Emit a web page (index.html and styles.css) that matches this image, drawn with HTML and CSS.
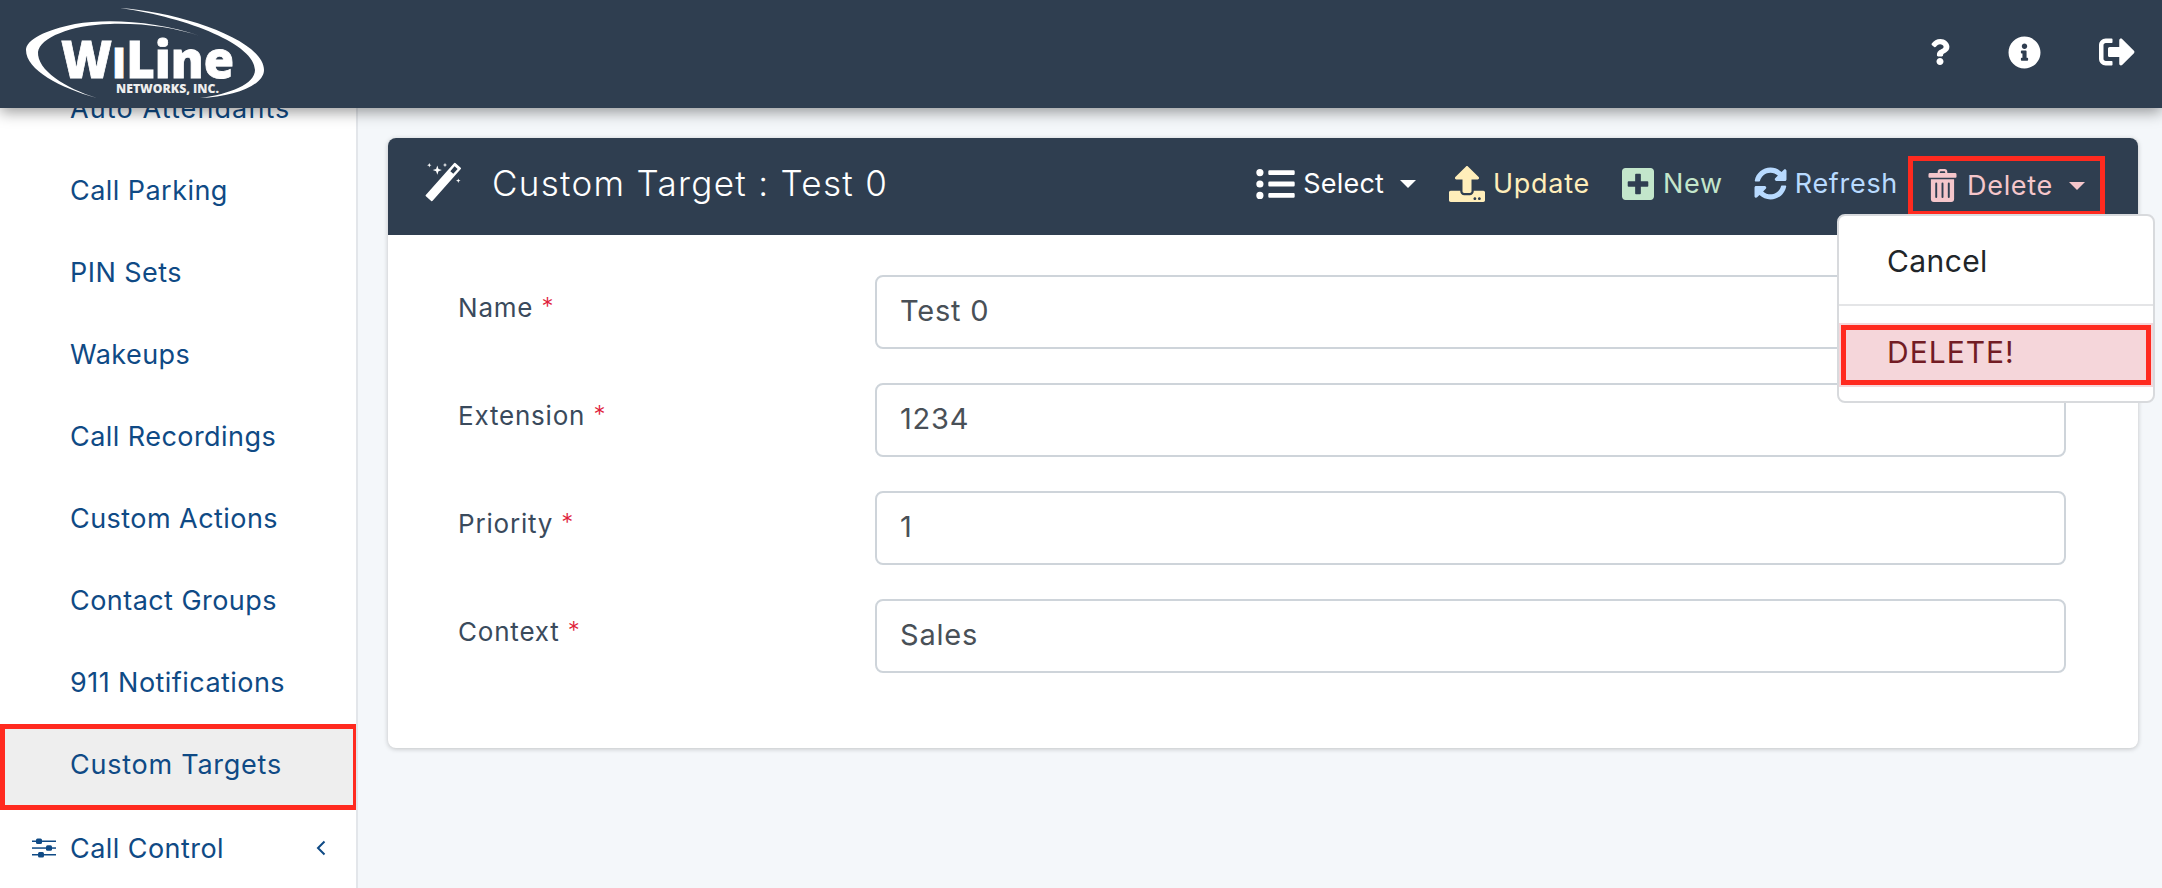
FILE: index.html
```html
<!DOCTYPE html>
<html lang="en">
<head>
<meta charset="utf-8">
<title>Custom Target : Test 0</title>
<link rel="stylesheet" href="styles.css">
</head>
<body>
<header class="topbar">
  <svg class="logo" viewBox="0 0 290 108" width="290" height="108" aria-label="WiLine Networks, Inc.">
    <path fill="#fff" d="M200 36C160 22 110 18 75 24C45 30 26 40 26 50C26 70 60 88 97 98C65 88 37 70 38 52C40 38 70 25 110 24C145 23 175 28 200 36Z"/>
    <path fill="#fff" d="M120 8C180 12 264 40 264 70C264 85 235 97 200 98C230 94 255 84 255 70C255 45 190 18 120 8Z"/>
    <text class="logo-main" x="61" y="78" textLength="173" lengthAdjust="spacingAndGlyphs">W<tspan class="logo-small">i</tspan>Line</text>
    <text class="logo-sub" x="116" y="93" textLength="103" lengthAdjust="spacingAndGlyphs">NETWORKS, INC.</text>
  </svg>
  <nav class="top-icons">
    <svg class="ti-q" viewBox="0 0 384 512"><path fill="#fff" d="M202 0C122 0 70.500 32.700 29.900 91c-7.400 10.600-5.100 25.100 5.200 32.900l43.100 32.700c10.400 7.900 25.100 6 33.300-4.100 25-31.400 43.600-49.500 82.700-49.500 30.800 0 68.800 19.800 68.800 49.600 0 22.600-18.600 34.100-49 51.200-35.400 19.900-82.300 44.600-82.300 106.400V320c0 13.300 10.700 24 24 24h72.500c13.200 0 24-10.700 24-24v-5.800c0-42.800 125.200-44.600 125.200-160.600C377.500 66.300 286.900 0 202 0zM192 373.500c-38.200 0-69.300 31-69.300 69.200 0 38.200 31.100 69.300 69.300 69.300s69.300-31.100 69.300-69.300-31.100-69.200-69.300-69.200z"/></svg>
    <svg class="ti-i" viewBox="0 0 512 512"><path fill="#fff" d="M256 8C119 8 8 119.100 8 256c0 137 111 248 248 248s248-111 248-248C504 119.100 393 8 256 8zm0 110c23.200 0 42 18.800 42 42s-18.800 42-42 42-42-18.800-42-42 18.800-42 42-42zm56 254c0 6.600-5.400 12-12 12h-88c-6.600 0-12-5.400-12-12v-24c0-6.600 5.400-12 12-12h12v-64h-12c-6.600 0-12-5.400-12-12v-24c0-6.600 5.400-12 12-12h64c6.600 0 12 5.400 12 12v100h12c6.600 0 12 5.400 12 12v24z"/></svg>
    <svg class="ti-o" viewBox="0 0 512 512"><path fill="#fff" d="M497 273L329 441c-15 15-41 4.500-41-17v-96H152c-13.300 0-24-10.700-24-24v-96c0-13.300 10.700-24 24-24h136V88c0-21.400 25.900-32 41-17l168 168c9.300 9.400 9.300 24.600 0 34zM192 436v-40c0-6.600-5.400-12-12-12H96c-17.700 0-32-14.300-32-32V160c0-17.700 14.300-32 32-32h84c6.600 0 12-5.400 12-12V76c0-6.600-5.400-12-12-12H96c-53 0-96 43-96 96v192c0 53 43 96 96 96h84c6.600 0 12-5.400 12-12z"/></svg>
  </nav>
</header>
<div class="shell">
  <aside class="sidebar">
    <ul class="side-list">
      <li class="side-item wide"><a>Auto Attendants</a></li>
      <li class="side-item"><a>Call Parking</a></li>
      <li class="side-item"><a>PIN Sets</a></li>
      <li class="side-item"><a>Wakeups</a></li>
      <li class="side-item"><a>Call Recordings</a></li>
      <li class="side-item"><a>Custom Actions</a></li>
      <li class="side-item"><a>Contact Groups</a></li>
      <li class="side-item"><a>911 Notifications</a></li>
      <li class="side-item active"><a>Custom Targets</a></li>
      <li class="side-group">
        <svg class="sliders" viewBox="0 0 24 20"><g fill="#0f4a85"><rect x="0" y="2.500" width="24" height="1.500"/><rect x="0" y="9.300" width="24" height="1.500"/><rect x="0" y="16" width="24" height="1.500"/><rect x="4" y="0.500" width="6" height="5.500" rx="1.500"/><rect x="14" y="7.300" width="6" height="5.500" rx="1.500"/><rect x="6" y="14" width="6" height="5.500" rx="1.500"/></g></svg>
        <span class="side-group-label">Call Control</span>
        <svg class="chev" viewBox="0 0 10 16"><path d="M8.500 1.500L2 8l6.500 6.500" fill="none" stroke="#0f4a85" stroke-width="2"/></svg>
      </li>
    </ul>
  </aside>
  <main class="content">
    <section class="card">
      <div class="card-head">
        <svg class="wand" viewBox="0 0 37 40"><g fill="#fff"><path fill-rule="evenodd" d="M29 1.200a1 1 0 0 1 1.400-.1l5.300 4.600a1 1 0 0 1 .1 1.400L7.600 38.800a1 1 0 0 1-1.400.1L.9 34.300a1 1 0 0 1-.1-1.400zM29.600 4.300l-4.300 4.900 3 2.600 4.300-4.900z"/><path d="M12.300 3.500l1.200 3.400 3.400 1.200-3.400 1.200-1.200 3.400-1.200-3.400-3.400-1.200 3.400-1.200z"/><path d="M4.300 1l.6 1.600 1.600.6-1.600.6-.6 1.600-.6-1.600-1.600-.6 1.600-.6z"/><path d="M20 .8l.6 1.600 1.600.6-1.600.6-.6 1.600-.6-1.600-1.600-.6 1.600-.6z"/><path d="M33.300 16.400l.6 1.700 1.700.6-1.700.6-.6 1.700-.6-1.700-1.700-.6 1.700-.6z"/></g></svg>
        <h1 class="card-title">Custom Target : Test 0</h1>
        <div class="toolbar">
          <button class="tool t-select"><svg class="ic-list" viewBox="0 0 512 400"><path fill="#fff" d="M48 0a48 48 0 1 0 48 48A48 48 0 0 0 48 0zm0 152a48 48 0 1 0 48 48 48 48 0 0 0-48-48zm0 152a48 48 0 1 0 48 48 48 48 0 0 0-48-48zM496 320H176a16 16 0 0 0-16 16v32a16 16 0 0 0 16 16h320a16 16 0 0 0 16-16v-32a16 16 0 0 0-16-16zM496 16H176a16 16 0 0 0-16 16v32a16 16 0 0 0 16 16h320a16 16 0 0 0 16-16V32a16 16 0 0 0-16-16zM496 168H176a16 16 0 0 0-16 16v32a16 16 0 0 0 16 16h320a16 16 0 0 0 16-16v-32a16 16 0 0 0-16-16z"/></svg>Select<span class="caret"></span></button>
          <button class="tool t-update"><svg class="ic-up" viewBox="0 0 512 512"><path fill="#ffeeba" d="M296 384h-80c-13.300 0-24-10.700-24-24V192h-87.700c-17.800 0-26.700-21.500-14.100-34.100L242.300 5.700c7.500-7.500 19.800-7.500 27.300 0l152.200 152.200c12.600 12.600 3.700 34.100-14.100 34.100H320v168c0 13.300-10.700 24-24 24zm216-8v112c0 13.300-10.700 24-24 24H24c-13.300 0-24-10.700-24-24V376c0-13.300 10.700-24 24-24h136v8c0 30.900 25.100 56 56 56h80c30.900 0 56-25.100 56-56v-8h136c13.300 0 24 10.700 24 24zm-124 88c0-11-9-20-20-20s-20 9-20 20 9 20 20 20 20-9 20-20zm64 0c0-11-9-20-20-20s-20 9-20 20 9 20 20 20 20-9 20-20z"/></svg>Update</button>
          <button class="tool t-new"><svg class="ic-new" viewBox="0 0 448 448"><path fill="#c3e6cb" d="M400 0H48C21.500 0 0 21.500 0 48v352c0 26.500 21.500 48 48 48h352c26.500 0 48-21.500 48-48V48c0-26.500-21.500-48-48-48zm-32 252c0 6.600-5.400 12-12 12h-92v92c0 6.600-5.400 12-12 12h-56c-6.600 0-12-5.400-12-12v-92H92c-6.600 0-12-5.400-12-12v-56c0-6.600 5.400-12 12-12h92V92c0-6.600 5.400-12 12-12h56c6.600 0 12 5.400 12 12v92h92c6.600 0 12 5.400 12 12v56z"/></svg>New</button>
          <button class="tool t-refresh"><svg class="ic-ref" viewBox="0 0 512 512"><path fill="#b8daff" d="M370.700 133.300C339.500 104 298.900 88 255.800 88c-77.400.1-144.300 53.200-162.700 126.900-1.400 5.300-6.200 9.100-11.700 9.100H24.100c-7.500 0-13.200-6.800-11.800-14.200C33.900 94.900 134.800 8 256 8c66.400 0 126.800 26.100 171.300 68.700L463 41c15.100-15.100 41-4.400 41 16.900V192c0 13.300-10.700 24-24 24H345.900c-21.300 0-32-25.900-16.900-41l41.700-41.700zM32 296h134.100c21.300 0 32 25.900 16.900 41l-41.700 41.700C172.500 408 213.100 424 256.200 424c77.400-.1 144.300-53.100 162.700-126.800 1.400-5.400 6.200-9.200 11.700-9.200h57.300c7.500 0 13.200 6.800 11.800 14.200C478.100 417.100 377.200 504 256 504c-66.400 0-126.800-26.100-171.300-68.700L49 471c-15.100 15.100-41 4.400-41-16.900V320c0-13.300 10.700-24 24-24z"/></svg>Refresh</button>
          <div class="delete-wrap">
            <button class="tool t-delete"><svg class="ic-trash" viewBox="0 0 30 34"><path fill="#f5c6cb" fill-rule="evenodd" d="M10 4V3a3 3 0 0 1 3-3h4a3 3 0 0 1 3 3v1h8a1.500 1.500 0 0 1 1.500 1.500V8a1 1 0 0 1-1 1H1.500a1 1 0 0 1-1-1V5.500A1.500 1.500 0 0 1 2 4zm2.200 0h5.600V3.200a1 1 0 0 0-1-1h-3.600a1 1 0 0 0-1 1zM3 10.500h24V31a3 3 0 0 1-3 3H6a3 3 0 0 1-3-3zM8.500 14a1 1 0 0 0-1 1v14a1 1 0 0 0 2 0V15a1 1 0 0 0-1-1zm6.500 0a1 1 0 0 0-1 1v14a1 1 0 0 0 2 0V15a1 1 0 0 0-1-1zm6.500 0a1 1 0 0 0-1 1v14a1 1 0 0 0 2 0V15a1 1 0 0 0-1-1z"/></svg>Delete<span class="caret"></span></button>
            <div class="menu">
              <a class="menu-item">Cancel</a>
              <div class="menu-divider"></div>
              <div class="menu-danger"><a class="menu-danger-in">DELETE!</a></div>
            </div>
          </div>
        </div>
      </div>
      <form class="card-body">
        <div class="field"><label class="field-label">Name <span class="req">*</span></label><div class="field-input">Test 0</div></div>
        <div class="field"><label class="field-label">Extension <span class="req">*</span></label><div class="field-input">1234</div></div>
        <div class="field"><label class="field-label">Priority <span class="req">*</span></label><div class="field-input">1</div></div>
        <div class="field"><label class="field-label">Context <span class="req">*</span></label><div class="field-input">Sales</div></div>
      </form>
    </section>
  </main>
</div>
</body>
</html>
```
FILE: styles.css
```css
* { box-sizing: border-box; }
html, body { margin: 0; height: 100%; overflow: hidden; }
body {
  font-family: Inter, "Noto Sans", sans-serif;
  background: #f4f7fa;
  display: flex;
  flex-direction: column;
}
.topbar {
  height: 108px;
  flex: none;
  background: #2f3e50;
  display: flex;
  align-items: flex-start;
  justify-content: space-between;
  box-shadow: 0 4px 14px rgba(0, 0, 0, .4);
  position: relative;
  z-index: 5;
}
.logo { display: block; }
.logo-main { font: 800 52px "Open Sans", sans-serif; fill: #fff; stroke: #fff; stroke-width: .8px; }
.logo-small { font-variant: small-caps; font-size: 62px; }
.logo-sub { font: 800 12.500px "Open Sans", sans-serif; fill: #eee; }
.top-icons { display: flex; align-items: flex-start; padding: 39px 27px 0 0; }
.top-icons svg { display: block; }
.ti-q { width: 20px; height: 26px; margin-right: 58px; }
.ti-i { width: 33px; height: 33px; margin-top: -3px; margin-right: 58px; }
.ti-o { width: 36px; height: 36px; margin-top: -5px; }
.shell { flex: 1; display: flex; min-height: 0; }
.sidebar {
  width: 358px;
  flex: none;
  background: #fff;
  border-right: 2px solid #e3e6ea;
  overflow: hidden;
}
.side-list { list-style: none; margin: -41px 0 0; padding: 0; }
.side-item {
  height: 82px;
  display: flex;
  align-items: center;
  padding-left: 70px;
  color: #0f4a85;
  font-size: 27px;
  letter-spacing: .45px;
}
.side-item.wide { letter-spacing: 1.1px; }
.side-item.active {
  height: 86px;
  margin: 1px -2px -3px 0;
  background: #eee;
  border: 5px solid #ff2a1f;
  padding: 0 0 6px 65px;
  letter-spacing: .75px;
}
.side-group {
  height: 82px;
  display: flex;
  align-items: center;
  padding: 0 30px 0 32px;
  color: #0f4a85;
  font-size: 27px;
  letter-spacing: .45px;
}
.sliders { width: 24px; height: 20px; margin-right: 14px; }
.side-group-label { flex: 1; }
.chev { width: 10px; height: 16px; }
.content { flex: 1; padding: 30px 24px 0 30px; min-width: 0; }
.card {
  background: #fff;
  border-radius: 8px;
  box-shadow: 0 1px 5px rgba(0, 0, 0, .22);
}
.card-head {
  height: 97px;
  background: #2f3e50;
  border-radius: 8px 8px 0 0;
  display: flex;
  align-items: center;
  padding: 0 33px 0 37px;
  color: #fff;
}
.wand { width: 37px; height: 40px; margin: 0 30px 10px 0; }
.card-title { margin: 0; flex: 1; font-size: 35px; font-weight: 300; letter-spacing: 1.3px; padding-bottom: 8px; }
.toolbar { display: flex; align-items: center; margin-bottom: 2px; }
.tool {
  display: flex;
  align-items: center;
  background: none;
  border: 0;
  padding: 0 0 4px;
  font: 400 27px Inter, sans-serif;
  letter-spacing: .7px;
  height: 60px;
}
.tool svg { display: block; }
.caret {
  width: 0;
  height: 0;
  border: 8px solid transparent;
  border-top-color: currentColor;
  border-bottom: 0;
  margin-left: 16px;
}
.t-select { color: #fff; margin-right: 33px; letter-spacing: .2px; }
.t-update { color: #ffeeba; margin-right: 32px; }
.t-new { color: #c3e6cb; margin-right: 31px; }
.t-refresh { color: #b8daff; margin-right: 10px; }
.t-delete { color: #f5c6cb; border: 5px solid #ff2a1f; width: 197px; padding: 0 0 0 15px; }
.ic-list { width: 39px; height: 30px; margin-right: 8px; }
.ic-up { width: 36px; height: 36px; margin-right: 8px; }
.ic-new { width: 32px; height: 32px; margin-right: 9px; }
.ic-ref { width: 33px; height: 33px; margin-right: 8px; }
.ic-trash { width: 29px; height: 33px; margin-right: 10px; }
.delete-wrap { position: relative; }
.menu {
  position: absolute;
  top: 58px;
  right: -50px;
  width: 318px;
  height: 189px;
  background: #fff;
  border: 2px solid #d8dadd;
  border-radius: 8px;
  padding-top: 15px;
  z-index: 3;
  font-size: 30px;
}
.menu-item { display: block; padding: 0 0 0 48px; height: 60px; line-height: 60px; color: #212529; letter-spacing: .4px; }
.menu-divider { height: 2px; background: #e4e5e7; margin: 13px 0 17px; }
.menu-danger { background: #f5d6da; padding: 2px 0; }
.menu-danger-in {
  display: block;
  margin: 0 2px;
  height: 60px;
  line-height: 45px;
  border: 5px solid #ff2a1f;
  padding-left: 41px;
  color: #721c24;
  letter-spacing: 1px;
}
.card-body { padding: 40px 72px 75px 70px; }
.field { display: flex; margin-bottom: 34px; }
.field:last-child { margin-bottom: 0; }
.field-label {
  width: 417px;
  flex: none;
  font-size: 26px;
  color: #3a4a5c;
  padding-top: 17px;
  letter-spacing: .8px;
}
.req { color: #e0213a; font-size: 24px; position: relative; top: -2px; font-weight: 300; }
.field-input {
  flex: 1;
  height: 74px;
  border: 2px solid #ced4da;
  border-radius: 8px;
  display: flex;
  align-items: center;
  padding: 0 0 4px 23px;
  font-size: 29px;
  color: #495057;
  letter-spacing: .8px;
}
```
